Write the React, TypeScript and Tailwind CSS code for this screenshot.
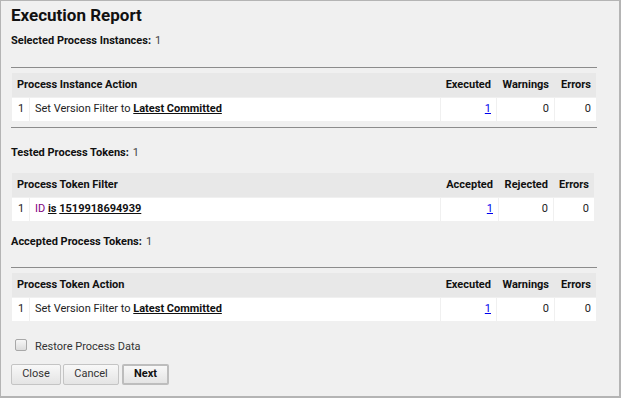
import { ReactNode } from 'react';

type Row = {
  label: ReactNode;
  counts: [ReactNode, ReactNode, ReactNode];
};

interface ReportTableProps {
  title: string;
  columns: [string, string, string];
  row: Row;
  cols: string;
  className?: string;
}

function ReportTable({ title, columns, row, cols, className = '' }: ReportTableProps) {
  return (
    <div className={`ml-px ${className}`}>
      {/* Header */}
      <div className={`grid ${cols} gap-x-px h-[24px] bg-[#e8e8e8] items-center font-bold text-[#111]`}>
        <div className="col-span-2 pl-[5px]">{title}</div>
        {columns.map((c) => (
          <div key={c} className="text-right pr-[5px]">
            {c}
          </div>
        ))}
      </div>
      {/* Data row */}
      <div className={`grid ${cols} gap-x-px h-[23px] mt-px text-[#222]`}>
        <div className="bg-white flex items-center pl-[6px]">1</div>
        <div className="bg-white flex items-center pl-[5px]">{row.label}</div>
        {row.counts.map((c, i) => (
          <div key={i} className="bg-white flex items-center justify-end pr-[5px]">
            {c}
          </div>
        ))}
      </div>
    </div>
  );
}

const VersionLabel = (
  <span>
    Set Version Filter to <span className="font-bold underline text-[#111]">Latest Committed</span>
  </span>
);

const CountLink = <a href="#" className="text-[#0000ee] underline">1</a>;

export default function App() {
  return (
    <div className="w-[621px] h-[398px] bg-[#f0f0f0] border-t border-l border-r-2 border-b-2 border-[#b4b4b4] font-['Roboto',sans-serif] text-[11px] text-[#222] overflow-hidden">
      <div className="pl-[10px] pr-[22px]">
        <h1 className="h-[28px] leading-[28px] text-[17px] font-bold text-[#111]">Execution Report</h1>
        <div className="h-[24px] flex items-center">
          <span className="font-bold text-[#111]">Selected Process Instances:</span>
          <span className="ml-1 text-[#444]">1</span>
        </div>

        <div className="mt-[14px] h-px bg-[#8c8c8c]" />
        <div className="mt-[5px]">
          <ReportTable
            title="Process Instance Action"
            columns={['Executed', 'Warnings', 'Errors']}
            cols="grid-cols-[17px_1fr_55px_57px_41px]"
            className="mr-px"
            row={{ label: VersionLabel, counts: [CountLink, '0', '0'] }}
          />
        </div>
        <div className="mt-[6px] h-px bg-[#8c8c8c]" />

        <div className="mt-[13px] h-[24px] flex items-center">
          <span className="font-bold text-[#111]">Tested Process Tokens:</span>
          <span className="ml-1 text-[#444]">1</span>
        </div>
        <div className="mt-[8px]">
          <ReportTable
            title="Process Token Filter"
            columns={['Accepted', 'Rejected', 'Errors']}
            cols="grid-cols-[17px_1fr_57px_54px_40px]"
            className="mr-[3px]"
            row={{
              label: (
                <span>
                  <span className="text-[#800080]">ID</span>{' '}
                  <span className="font-bold underline text-[#111]">is</span>{' '}
                  <span className="font-bold underline text-[#111]">1519918694939</span>
                </span>
              ),
              counts: [CountLink, '0', '0'],
            }}
          />
        </div>

        <div className="mt-[9px] h-[24px] flex items-center">
          <span className="font-bold text-[#111]">Accepted Process Tokens:</span>
          <span className="ml-1 text-[#444]">1</span>
        </div>

        <div className="mt-[13px] h-px bg-[#8c8c8c]" />
        <div className="mt-[5px]">
          <ReportTable
            title="Process Token Action"
            columns={['Executed', 'Warnings', 'Errors']}
            cols="grid-cols-[17px_1fr_55px_57px_41px]"
            className="mr-px"
            row={{ label: VersionLabel, counts: [CountLink, '0', '0'] }}
          />
        </div>

        {/* Restore checkbox */}
        <label className="mt-[12px] h-[24px] flex items-center gap-[8px] pl-[4px] text-[#333]">
          <span className="-mt-px w-[12px] h-[12px] rounded-[2px] border border-[#a8a8a8] bg-gradient-to-b from-[#f6f6f6] to-[#dcdcdc]" />
          <span className="mt-[4px]">Restore Process Data</span>
        </label>

        {/* Buttons */}
        <div className="mt-[7px] flex gap-[2px]">
          <button className="w-[50px] h-[21px] border border-[#c4c4c4] rounded-[2px] bg-gradient-to-b from-[#f8f8f8] to-[#e4e4e4] text-[#333]">
            Close
          </button>
          <button className="w-[56px] h-[21px] border border-[#c4c4c4] rounded-[2px] bg-gradient-to-b from-[#f8f8f8] to-[#e4e4e4] text-[#333]">
            Cancel
          </button>
          <button className="ml-px w-[47px] h-[21px] border-2 border-[#bdbdbd] rounded-[2px] bg-gradient-to-b from-[#f8f8f8] to-[#e4e4e4] font-bold text-[#111]">
            Next
          </button>
        </div>
      </div>
    </div>
  );
}
